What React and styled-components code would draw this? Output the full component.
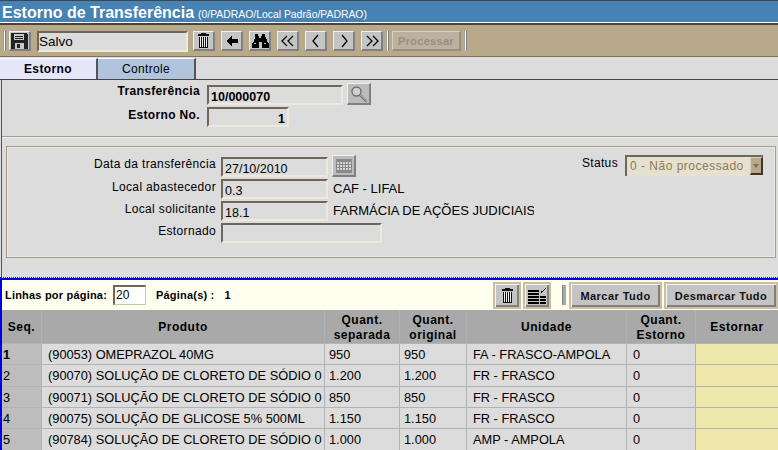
import React from "react";
import styled, { createGlobalStyle, css } from "styled-components";

const GlobalStyle = createGlobalStyle`
  html, body {
    margin: 0;
    padding: 0;
    background: #dcdcdc;
  }
  * {
    box-sizing: border-box;
  }
  #root {
    width: 778px;
    height: 450px;
    overflow: hidden;
  }
`;

const FONT = `"Liberation Sans", Arial, sans-serif`;

const Page = styled.div`
  width: 778px;
  height: 450px;
  overflow: hidden;
  display: flex;
  flex-direction: column;
  font-family: ${FONT};
  font-size: 12px;
  color: #000;
  background: #dcdcdc;
`;

const TitleBar = styled.div`
  height: 25px;
  padding: 2px 0 0 2px;
  background: #4682b4;
  border-top: 1px solid #444;
  border-bottom: 2px solid #444;
  box-shadow: inset 0 -1px 0 #fff;
  display: flex;
  align-items: baseline;
  gap: 4px;
  color: #fff;
`;

const Title = styled.h1`
  margin: 0;
  font-size: 16px;
  line-height: 20px;
  font-weight: 700;
`;

const TitleInfo = styled.span`
  font-size: 10.4px;
`;

const Toolbar = styled.div`
  height: 32px;
  padding: 6px 0 0 3px;
  background: #b8a98a;
  border-bottom: 1px solid #85704f;
  display: flex;
  align-items: flex-start;
`;

const Grip = styled.div`
  width: 3px;
  height: 20px;
  flex: none;
  background: #fff;
  border-left: 1px solid #a0a0a0;
  border-right: 1px solid #808080;
  margin-right: 3px;
`;

const raised = css`
  border-style: solid;
  border-width: 1px 2px 2px 1px;
  border-color: #f0f0f0 #808080 #808080 #f0f0f0;
`;

const IconButton = styled.button`
  ${raised}
  width: 22px;
  height: 20px;
  flex: none;
  padding: 0;
  margin-right: ${(p) => p.$after ?? 6}px;
  background: #c4c4c4;
  display: flex;
  align-items: center;
  justify-content: center;
`;

const StatusInput = styled.div`
  width: 151px;
  height: 21px;
  flex: none;
  margin: 0 5px 0 6px;
  background: #dcdcdc;
  border-style: solid;
  border-width: 2px;
  border-color: #6e6656 #efe9dc #efe9dc #6e6656;
  font-size: 13.5px;
  line-height: 17px;
`;

const ProcessButton = styled.button`
  ${raised}
  width: 69px;
  height: 20px;
  flex: none;
  padding: 0;
  margin: 0 3px 0 0;
  border-color: #d8d0c0 #98907f #98907f #d8d0c0;
  background: #bcb1a0;
  color: #98907f;
  font-family: ${FONT};
  font-size: 11px;
  font-weight: 700;
  letter-spacing: 0.3px;
`;

const Tabs = styled.div`
  height: 23px;
  padding-top: 1px;
  display: flex;
  background: #dcdcdc;
  border-bottom: 1px solid #444;
`;

const Tab = styled.div`
  width: 98px;
  height: 21px;
  text-align: center;
  line-height: 20px;
  background: ${(p) => (p.$active ? "#e6e6fa" : "#b0c4de")};
  border-top: 1px solid #fff;
  border-right: 2px solid #555;
  font-weight: ${(p) => (p.$active ? 700 : 400)};
  letter-spacing: ${(p) => (p.$active ? "0.4px" : "0.3px")};
`;

const FormArea = styled.div`
  height: 197px;
  border-left: 1px solid #555;
  margin-left: 1px;
  display: flex;
  flex-direction: column;
`;

const KeyRows = styled.div`
  height: 56px;
  padding-top: 5px;
  display: flex;
  flex-direction: column;
  gap: 2px;
`;

const FormRow = styled.div`
  display: flex;
  height: 20px;
  align-items: flex-start;
`;

const Label = styled.label`
  width: ${(p) => (p.$width ? `${p.$width}px` : "auto")};
  flex: none;
  margin-top: ${(p) => p.$shift ?? 0}px;
  text-align: right;
  line-height: 16px;
  font-weight: ${(p) => (p.$bold ? 700 : 400)};
  letter-spacing: 0.35px;
  white-space: nowrap;
`;

const Field = styled.div`
  width: ${(p) => p.$width}px;
  height: 20px;
  flex: none;
  margin-left: ${(p) => p.$gap ?? 7}px;
  padding: 0 2px;
  background: #dcdcdc;
  border-style: solid;
  border-width: 2px;
  border-color: #6e6656 #efe9dc #efe9dc #6e6656;
  font-size: 12.5px;
  line-height: 20px;
  font-weight: ${(p) => (p.$bold ? 700 : 400)};
  text-align: ${(p) => p.$align ?? "left"};
`;

const Divider = styled.div`
  height: 2px;
  background: #a39c8c;
  border-bottom: 1px solid #f4f0e6;
`;

const FieldGroup = styled.div`
  position: relative;
  height: 112px;
  margin: 8px 2px 0 4px;
  padding: 10px 0 0;
  border: 1px solid #a39c8c;
  box-shadow: 0 0 0 1px #efe9dc inset;
  display: flex;
  flex-direction: column;
  gap: 2px;
`;

const LookupButton = styled.button`
  ${raised}
  width: 24px;
  height: 22px;
  flex: none;
  padding: 0;
  margin: -2px 0 0 4px;
  background: #bcbcbc;
  display: flex;
  align-items: center;
  justify-content: center;
`;

const Description = styled.div`
  width: 201px;
  margin-left: 5px;
  overflow: hidden;
  white-space: nowrap;
  font-size: 13px;
  line-height: 20px;
`;

const StatusBox = styled.div`
  position: absolute;
  top: 8px;
  right: 12px;
  display: flex;
  align-items: flex-start;
  gap: 7px;
`;

const Select = styled.div`
  width: 138px;
  height: 21px;
  padding-left: 3px;
  display: flex;
  justify-content: space-between;
  background: #e6e0d0;
  border-style: solid;
  border-width: 2px 0 0 2px;
  border-color: #6e6656;
  color: #8b7b57;
  line-height: 19px;
  letter-spacing: 0.5px;
`;

const SelectArrow = styled.div`
  width: 13px;
  height: 18px;
  background: #b8a98a;
  border-style: solid;
  border-width: 1px 2px 2px 1px;
  border-color: #d8d0c0 #3d3626 #3d3626 #d8d0c0;
  display: flex;
  align-items: center;
  justify-content: center;
  &::after {
    content: "";
    border-style: solid;
    border-width: 4px 3px 0;
    border-color: #7b6f58 transparent transparent;
  }
`;

const GridPanel = styled.div`
  flex: 1;
  min-height: 0;
  background: #fffff0;
  border-top: 1px dotted #333;
  border-left: 2px solid #0000e6;
  box-shadow: inset 0 2px 0 #0000e6;
`;

const GridTools = styled.div`
  height: 32px;
  padding-top: 4px;
  display: flex;
  align-items: flex-start;
  font-size: 11px;
  font-weight: 700;
  letter-spacing: 0.2px;
`;

const ToolText = styled.span`
  line-height: 27px;
  margin-left: ${(p) => p.$left ?? 0}px;
  white-space: nowrap;
`;

const PageInput = styled.div`
  width: 33px;
  height: 20px;
  margin: 3px 0 0 6px;
  padding-left: 1px;
  background: #fff;
  border-style: solid;
  border-width: 2px 1px 1px 2px;
  border-color: #6e6656 #cfc7b4 #cfc7b4 #6e6656;
  font-size: 12px;
  font-weight: 400;
  line-height: 16px;
`;

const ToolGroup = styled.div`
  margin-left: auto;
  display: flex;
  align-items: flex-start;
  gap: 2px;
`;

const FramedButton = styled.button`
  width: ${(p) => p.$width}px;
  height: 27px;
  flex: none;
  padding: 0;
  background: #c4c4c4;
  border: 2px solid #cdbf9e;
  box-shadow: inset 1px 1px 0 #f4f4f4, inset -2px -2px 0 #808080;
  display: flex;
  align-items: center;
  justify-content: center;
  font-family: ${FONT};
  font-size: 11px;
  font-weight: 700;
  letter-spacing: 0.45px;
  color: #111;
`;

const ToolGrip = styled.div`
  width: 4px;
  height: 20px;
  margin: 3px 1px 0 9px;
  background: #a8a8a8;
  border-left: 1px solid #808080;
`;

const Table = styled.div`
  display: grid;
  grid-template-columns: 39px 282px 74px 66px 159px 68px 82px;
  grid-template-rows: 33px;
  grid-auto-rows: 20.33px;
  gap: 1px;
  background: #b0b4b4;
`;

const HeadCell = styled.div`
  background: #a9a9a9;
  padding-top: 2px;
  display: flex;
  align-items: center;
  justify-content: center;
  text-align: center;
  font-weight: 700;
  line-height: 15px;
  letter-spacing: 0.5px;
`;

const Cell = styled.div`
  background: #dcdcdc;
  padding-left: ${(p) => p.$pad ?? 6}px;
  overflow: hidden;
  white-space: nowrap;
  line-height: 21px;
  font-size: 12.8px;
`;

const SeqCell = styled(Cell)`
  background: #bdbdbd;
  padding-left: 1px;
  font-weight: ${(p) => (p.$first ? 700 : 400)};
`;

const EditCell = styled.div`
  background: #eee8aa;
`;

const Pixel = styled.svg`
  display: block;
  shape-rendering: crispEdges;
`;

const FloppyIcon = () => (
  <Pixel width="17" height="16" viewBox="0 0 17 16">
    <path fill="#222" d="M0 0h15l2 2v14H0z" />
    <path fill="#c8c8c8" d="M3 1h10v6H3z" />
    <path fill="#222" d="M4 3h8v1H4zM4 5h8v1H4z" />
    <path fill="#c8c8c8" d="M4 10h9v6H4z" />
    <path fill="#222" d="M6 11h3v4H6z" />
  </Pixel>
);

const TrashIcon = () => (
  <Pixel width="13" height="15" viewBox="0 0 13 15">
    <path fill="#111" d="M4 0h5v1h3v2H1V1h3z" />
    <path fill="#111" d="M2 4h9v11H2z" />
    <path fill="#eee" d="M3 4h1v10H3zM5 4h1v10H5zM7 4h1v10H7zM9 4h1v10H9z" />
  </Pixel>
);

const BackIcon = () => (
  <Pixel width="12" height="10" viewBox="0 0 12 10">
    <path fill="#000" d="M5 0h1v3h6v4H6v3H5L0 5z" />
  </Pixel>
);

const BinocularsIcon = () => (
  <Pixel width="18" height="14" viewBox="0 0 18 14">
    <path fill="#000" d="M4 0h3v2h1v2h2V2h1V0h3v3h1l1 4 2 3v4h-7V8H8v6H1v-4l2-3 1-4z" />
    <path fill="#c8c8c8" d="M3 9h2v1H3zM13 9h2v1h-2z" />
  </Pixel>
);

// chevrons are plain strokes, smooth edges look closer
const Chevrons = ({ points }) => (
  <svg width="16" height="14" viewBox="0 0 16 14" fill="none" stroke="#000" strokeWidth="1.3">
    {points.map((p) => (
      <polyline key={p} points={p} />
    ))}
  </svg>
);

const SearchIcon = () => (
  <svg width="18" height="18" viewBox="0 0 18 18" fill="none">
    <circle cx="6.5" cy="6.5" r="4.5" stroke="#707070" strokeWidth="1.4" fill="#d0d0d0" />
    <path d="M10 10l6.5 6.5" stroke="#707070" strokeWidth="2.4" />
    <path d="M10.5 10l6 6" stroke="#e8e8e8" strokeWidth="0.7" />
  </svg>
);

const CalendarIcon = () => (
  <Pixel width="16" height="14" viewBox="0 0 16 14">
    <path fill="#8a8a8a" d="M0 0h16v14H0z" />
    <path
      fill="#d4d4d4"
      d="M1 3h2v2H1zM4 3h2v2H4zM7 3h2v2H7zM10 3h2v2h-2zM13 3h2v2h-2zM1 6h2v2H1zM4 6h2v2H4zM7 6h2v2H7zM10 6h2v2h-2zM13 6h2v2h-2zM1 9h2v2H1zM4 9h2v2H4zM7 9h2v2H7zM10 9h2v2h-2zM13 9h2v2h-2z"
    />
  </Pixel>
);

const ListIcon = () => (
  <Pixel width="19" height="16" viewBox="0 0 19 16">
    <path
      fill="#000"
      d="M0 2h11v2H0zM0 5h11v2H0zM0 8h11v2H0zM0 11h11v2H0zM0 14h11v2H0zM12 8h6v2h-6zM12 11h6v2h-6zM12 14h6v2h-6z"
    />
    <path fill="#000" d="M17 0h1v1h-1zM16 1h1v1h-1zM15 2h1v1h-1zM13 3h2v1h-1v1h-1z" />
  </Pixel>
);

const rows = [
  ["(90053) OMEPRAZOL 40MG", "950", "950", "FA - FRASCO-AMPOLA"],
  ["(90070) SOLUÇÃO DE CLORETO DE SÓDIO 0", "1.200", "1.200", "FR - FRASCO"],
  ["(90071) SOLUÇÃO DE CLORETO DE SÓDIO 0", "850", "850", "FR - FRASCO"],
  ["(90075) SOLUÇÃO DE GLICOSE 5% 500ML", "1.150", "1.150", "FR - FRASCO"],
  ["(90784) SOLUÇÃO DE CLORETO DE SÓDIO 0", "1.000", "1.000", "AMP - AMPOLA"],
];

export default function App() {
  return (
    <>
      <GlobalStyle />
      <Page>
        <TitleBar>
          <Title>Estorno de Transferência</Title>
          <TitleInfo>(0/PADRAO/Local Padrão/PADRAO)</TitleInfo>
        </TitleBar>

        <Toolbar>
          <Grip />
          <IconButton $after={0}><FloppyIcon /></IconButton>
          <StatusInput>Salvo</StatusInput>
          <IconButton><TrashIcon /></IconButton>
          <IconButton><BackIcon /></IconButton>
          <IconButton><BinocularsIcon /></IconButton>
          <IconButton><Chevrons points={["7,2 2,7 7,12", "13,2 8,7 13,12"]} /></IconButton>
          <IconButton><Chevrons points={["10,1 5,7 10,13"]} /></IconButton>
          <IconButton><Chevrons points={["6,1 11,7 6,13"]} /></IconButton>
          <IconButton $after={3}><Chevrons points={["3,2 8,7 3,12", "9,2 14,7 9,12"]} /></IconButton>
          <Grip />
          <ProcessButton disabled>Processar</ProcessButton>
          <Grip />
        </Toolbar>

        <Tabs>
          <Tab $active>Estorno</Tab>
          <Tab>Controle</Tab>
        </Tabs>

        <FormArea>
          <KeyRows>
            <FormRow>
              <Label $width={198} $bold $shift={-2}>Transferência</Label>
              <Field $width={136} $bold>10/000070</Field>
              <LookupButton><SearchIcon /></LookupButton>
            </FormRow>
            <FormRow>
              <Label $width={198} $bold>Estorno No.</Label>
              <Field $width={82} $bold $align="right">1</Field>
            </FormRow>
          </KeyRows>
          <Divider />
          <FieldGroup>
            <FormRow>
              <Label $width={209} $shift={-1}>Data da transferência</Label>
              <Field $width={107} $gap={5}>27/10/2010</Field>
              <LookupButton><CalendarIcon /></LookupButton>
            </FormRow>
            <FormRow>
              <Label $width={209}>Local abastecedor</Label>
              <Field $width={107} $gap={5}>0.3</Field>
              <Description>CAF - LIFAL</Description>
            </FormRow>
            <FormRow>
              <Label $width={209}>Local solicitante</Label>
              <Field $width={107} $gap={5}>18.1</Field>
              <Description>FARMÁCIA DE AÇÕES JUDICIAIS</Description>
            </FormRow>
            <FormRow>
              <Label $width={209}>Estornado</Label>
              <Field $width={161} $gap={5} />
            </FormRow>
            <StatusBox>
              <Label>Status</Label>
              <Select>
                0 - Não processado
                <SelectArrow />
              </Select>
            </StatusBox>
          </FieldGroup>
        </FormArea>

        <GridPanel>
          <GridTools>
            <ToolText $left={3}>Linhas por página:</ToolText>
            <PageInput>20</PageInput>
            <ToolText $left={10}>Página(s) :</ToolText>
            <ToolText $left={10}>1</ToolText>
            <ToolGroup>
              <FramedButton $width={28}><TrashIcon /></FramedButton>
              <FramedButton $width={28}><ListIcon /></FramedButton>
              <ToolGrip />
              <FramedButton $width={93}>Marcar Tudo</FramedButton>
              <FramedButton $width={114}>Desmarcar Tudo</FramedButton>
            </ToolGroup>
          </GridTools>
          <Table>
            <HeadCell>Seq.</HeadCell>
            <HeadCell>Produto</HeadCell>
            <HeadCell>Quant.<br />separada</HeadCell>
            <HeadCell>Quant.<br />original</HeadCell>
            <HeadCell>Unidade</HeadCell>
            <HeadCell>Quant.<br />Estorno</HeadCell>
            <HeadCell>Estornar</HeadCell>
            {rows.map((row, i) => (
              <React.Fragment key={row[0] + i}>
                <SeqCell $first={i === 0}>{i + 1}</SeqCell>
                <Cell>{row[0]}</Cell>
                <Cell $pad={4}>{row[1]}</Cell>
                <Cell $pad={4}>{row[2]}</Cell>
                <Cell>{row[3]}</Cell>
                <Cell>0</Cell>
                <EditCell />
              </React.Fragment>
            ))}
          </Table>
        </GridPanel>
      </Page>
    </>
  );
}
